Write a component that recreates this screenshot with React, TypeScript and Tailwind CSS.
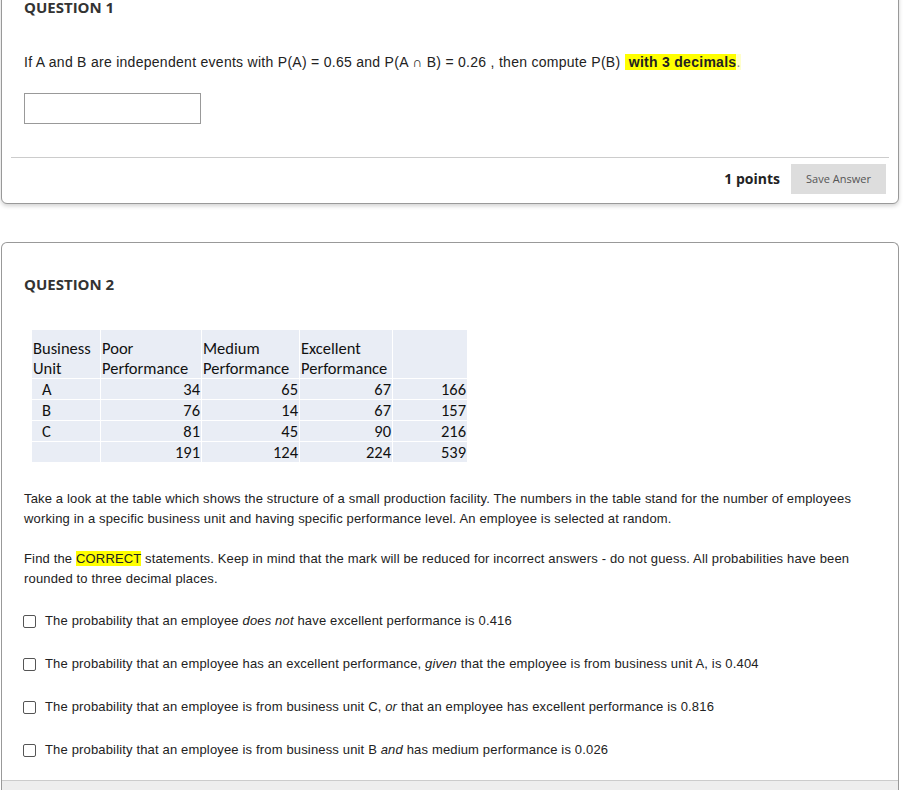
const rows = [
  ["A", "34", "65", "67", "166"],
  ["B", "76", "14", "67", "157"],
  ["C", "81", "45", "90", "216"],
  ["", "191", "124", "224", "539"],
];

const options = [
  <>The probability that an employee <i>does not</i> have excellent performance is 0.416</>,
  <>The probability that an employee has an excellent performance, <i>given</i> that the employee is from business unit A, is 0.404</>,
  <>The probability that an employee is from business unit C, <i>or</i> that an employee has excellent performance is 0.816</>,
  <>The probability that an employee is from business unit B <i>and</i> has medium performance is 0.026</>,
];

const App = () => {
  return (
    <div className="w-[909px] h-[790px] overflow-hidden bg-white text-[#222]">
      {/* question 1 */}
      <div className="ml-px -mt-[12px] w-[898px] rounded-md border border-[#999] bg-white shadow-[0_2px_4px_rgba(0,0,0,0.18)]">
        <div className="px-[22px] pt-[8px]">
          <h3 className="font-['Open_Sans',sans-serif] text-[15px] font-bold leading-[20px] text-[#333]">
            QUESTION 1
          </h3>
          <p className="mt-[35px] font-['Liberation_Sans',Arial,sans-serif] text-[14px] leading-[20px] tracking-[0.28px]">
            If A and B are independent events with P(A) = 0.65 and P(A ∩ B) = 0.26 , then compute P(B){" "}
            <span className="bg-[#ffff00] font-bold">&nbsp;with 3 decimals</span>
            <span className="bg-[#ffffcc] text-[#888]">.</span>
          </p>
          <input
            type="text"
            className="mt-[21px] block h-[31px] w-[177px] border border-[#999] bg-white"
          />
        </div>
        <div className="mx-[9px] mt-[33px] border-t border-[#ccc]" />
        <div className="flex items-center justify-end gap-[11px] pr-[12px] pt-[6px] pb-[9px]">
          <span className="-mt-[2px] font-['Open_Sans',sans-serif] text-[14px] font-bold text-[#222]">1 points</span>
          <button className="h-[30px] w-[95px] bg-[#ddd] font-['Open_Sans',sans-serif] text-[11px] text-[#555]">
            Save Answer
          </button>
        </div>
      </div>

      {/* question 2 */}
      <div className="ml-px mt-[38px] w-[898px] rounded-t-md border border-b-0 border-[#999] bg-white">
        <div className="px-[22px] pt-[31px]">
          <h3 className="font-['Open_Sans',sans-serif] text-[15px] font-bold leading-[20px] text-[#333]">
            QUESTION 2
          </h3>
          <table className="mt-[35px] ml-[7px] border-separate border-spacing-[1px] font-['Carlito','Lato',sans-serif] text-[16.5px] leading-[20px] text-[#111]">
            <thead>
              <tr className="h-[48px] align-bottom">
                <td className="w-[68px] bg-[#e9edf5] px-[1px] text-left">Business<br />Unit</td>
                <td className="w-[100px] bg-[#e9edf5] px-[1px] text-left">Poor<br />Performance</td>
                <td className="w-[97px] bg-[#e9edf5] px-[1px] text-left">Medium<br />Performance</td>
                <td className="w-[92px] bg-[#e9edf5] px-[1px] text-left">Excellent<br />Performance</td>
                <td className="w-[74px] bg-[#e9edf5] px-[1px]"></td>
              </tr>
            </thead>
            <tbody>
              {rows.map((r, i) => (
                <tr key={i} className="h-[20px]">
                  <td className="bg-[#e9edf5] pl-[10px]">{r[0]}</td>
                  <td className="bg-[#e9edf5] pr-[1px] text-right">{r[1]}</td>
                  <td className="bg-[#e9edf5] pr-[1px] text-right">{r[2]}</td>
                  <td className="bg-[#e9edf5] pr-[1px] text-right">{r[3]}</td>
                  <td className="bg-[#e9edf5] pr-[1px] text-right">{r[4]}</td>
                </tr>
              ))}
            </tbody>
          </table>

          <div className="mt-[26px] font-['Liberation_Sans',Arial,sans-serif] text-[13px] leading-[20px] tracking-[0.16px] text-[#222]">
            <p>
              Take a look at the table which shows the structure of a small production facility. The numbers in the table stand for the number of employees working in a specific business unit and having specific performance level. An employee is selected at random.
            </p>
            <p className="mt-[20px]">
              Find the <span className="bg-[#ffff00]">CORRECT</span> statements. Keep in mind that the mark will be reduced for incorrect answers - do not guess. All probabilities have been rounded to three decimal places.
            </p>
          </div>

          <ul className="mt-[22px] flex flex-col gap-[23px] font-['Liberation_Sans',Arial,sans-serif] text-[13px] leading-[20px] tracking-[0.16px]">
            {options.map((o, i) => (
              <li key={i} className="flex items-center gap-[9px]">
                <span className="-ml-px h-[13px] w-[13px] shrink-0 rounded-[2px] border border-[#555] bg-white" />
                <span>{o}</span>
              </li>
            ))}
          </ul>
        </div>
        <div className="mt-[20px] h-[20px] border-t border-[#ccc] bg-[#eee]" />
      </div>
    </div>
  );
};

export default App;
